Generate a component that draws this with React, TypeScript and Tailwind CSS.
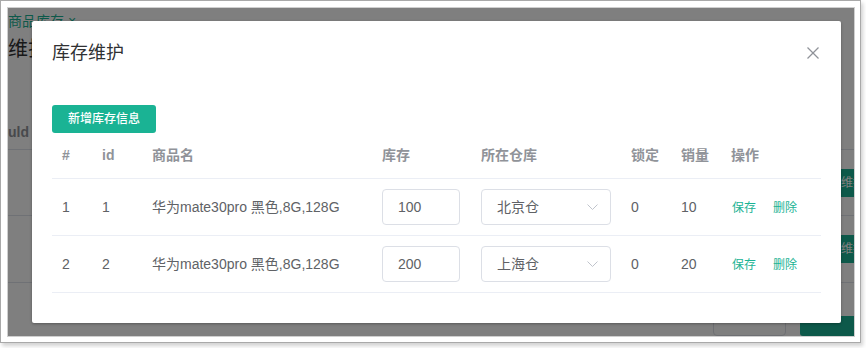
import React from 'react';

type Row = { idx: number; id: number; name: string; stock: number; warehouse: string; locked: number; sales: number };

const rows: Row[] = [
  { idx: 1, id: 1, name: '华为mate30pro 黑色,8G,128G', stock: 100, warehouse: '北京仓', locked: 0, sales: 10 },
  { idx: 2, id: 2, name: '华为mate30pro 黑色,8G,128G', stock: 200, warehouse: '上海仓', locked: 0, sales: 20 },
];

const cols = ['w-[40px]', 'w-[50px]', 'w-[230px]', 'w-[99px]', 'w-[150px]', 'w-[50px]', 'w-[50px]', 'w-[100px]'];
const heads = ['#', 'id', '商品名', '库存', '所在仓库', '锁定', '销量', '操作'];

const font = { fontFamily: '"Liberation Sans", "Noto Sans CJK SC", sans-serif' };

const Chevron = () => (
  <svg width="11" height="6" viewBox="0 0 11 6" fill="none" stroke="#c0c4cc" strokeWidth="1">
    <polyline points="0.5,0.5 5.5,5.5 10.5,0.5" />
  </svg>
);

const CloseIcon = () => (
  <svg width="12" height="12" viewBox="0 0 12 12" stroke="#909399" strokeWidth="1.2">
    <line x1="0.5" y1="0.5" x2="11.5" y2="11.5" />
    <line x1="11.5" y1="0.5" x2="0.5" y2="11.5" />
  </svg>
);

// page that sits behind the modal overlay
const BackPage = () => (
  <div className="absolute inset-0 bg-white flex flex-col">
    <div className="pt-[5px] h-[26px] text-[14px] leading-[16px] text-[#1ab394] whitespace-nowrap">商品库存 ×</div>
    <div className="mt-[3px] h-[24px] text-[20px] leading-[24px] text-[#303133] whitespace-nowrap">维护</div>
    <div className="mt-[55px] h-[34px] border-b border-[#dfe3ea] flex items-center text-[14px] font-bold text-[#909399]">uld</div>
    {[0, 1].map(i => (
      <div key={i} className="h-[67px] border-b border-[#dfe3ea] flex items-center justify-end">
        <div className="w-[13px] h-[28px] bg-[#1ab394] text-white text-[12px] leading-[28px] overflow-hidden whitespace-nowrap">维护</div>
      </div>
    ))}
    <div className="mt-[33px] flex justify-end gap-[14px]">
      <div className="w-[73px] h-[20px] border border-[#dcdfe6] rounded-[4px] bg-white" />
      <div className="w-[54px] h-[20px] bg-[#1ab394] rounded-l-[3px]" />
    </div>
  </div>
);

export default function App() {
  return (
    <div className="bg-white w-[866px] h-[348px]" style={font}>
      <div className="w-[861px] h-[343px] border border-[#a9a9a9] bg-white pl-[6px] pt-[6px] shadow-[2px_3px_4px_rgba(0,0,0,0.18)]">
        <div className="relative w-[848px] h-[330px] border border-[#cfcfcf] overflow-hidden">
          <BackPage />
          <div className="absolute inset-0 bg-black/50 flex items-start">
            <div className="ml-[24px] mt-[13px] w-[809px] h-[302px] bg-white rounded-[2px] shadow-[0_1px_3px_rgba(0,0,0,0.3)]">
              <div className="pt-[20px] px-[20px] pb-[10px] flex items-center justify-between">
                <span className="text-[18px] leading-[24px] text-[#303133]">库存维护</span>
                <span className="mr-[2px] flex"><CloseIcon /></span>
              </div>
              <div className="pt-[30px] px-[20px]">
                <button className="h-[28px] px-[16px] bg-[#1ab394] text-white text-[12px] font-medium rounded-[3px] leading-none">新增库存信息</button>
                <div className="w-[769px]">
                  <div className="flex h-[46px] border-b border-[#ebeef5] items-center text-[14px] font-bold text-[#909399]">
                    {heads.map((h, i) => <div key={h} className={`${cols[i]} pl-[10px]`}>{h}</div>)}
                  </div>
                  {rows.map(r => (
                    <div key={r.idx} className="flex h-[57px] border-b border-[#ebeef5] items-center text-[14px] text-[#606266]">
                      <div className={`${cols[0]} pl-[10px]`}>{r.idx}</div>
                      <div className={`${cols[1]} pl-[10px]`}>{r.id}</div>
                      <div className={`${cols[2]} pl-[10px] whitespace-nowrap`}>{r.name}</div>
                      <div className={`${cols[3]} pl-[10px]`}>
                        <div className="w-[78px] h-[36px] border border-[#dcdfe6] rounded-[4px] px-[15px] flex items-center">{r.stock}</div>
                      </div>
                      <div className={`${cols[4]} pl-[10px]`}>
                        <div className="w-[130px] h-[36px] border border-[#dcdfe6] rounded-[4px] pl-[15px] pr-[12px] flex items-center justify-between">
                          <span>{r.warehouse}</span>
                          <Chevron />
                        </div>
                      </div>
                      <div className={`${cols[5]} pl-[10px]`}>{r.locked}</div>
                      <div className={`${cols[6]} pl-[10px]`}>{r.sales}</div>
                      <div className={`${cols[7]} pl-[11px] flex gap-[17px] text-[12px] text-[#1ab394] pt-[2px]`}>
                        <span>保存</span>
                        <span>删除</span>
                      </div>
                    </div>
                  ))}
                </div>
              </div>
            </div>
          </div>
        </div>
      </div>
    </div>
  );
}
